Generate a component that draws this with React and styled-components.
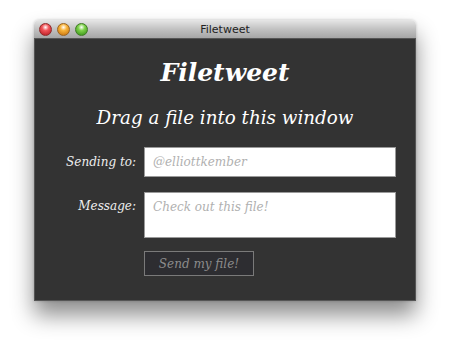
import React from 'react';
import styled, { createGlobalStyle } from 'styled-components';

const GlobalStyle = createGlobalStyle`
  html, body {
    margin: 0;
    padding: 0;
    background: #ffffff;
  }
`;

const Page = styled.div`
  width: 450px;
  height: 348px;
  padding: 20px 0 0 34px;
  box-sizing: border-box;
  overflow: hidden;
`;

const Window = styled.div`
  width: 382px;
  box-shadow: 0 14px 22px rgba(0, 0, 0, 0.45), 0 0 3px rgba(0, 0, 0, 0.2);
  border-radius: 5px 5px 0 0;
`;

const TitleBar = styled.div`
  height: 19px;
  display: flex;
  align-items: center;
  position: relative;
  padding-left: 5px;
  border-radius: 5px 5px 0 0;
  background: linear-gradient(#e6e6e6, #c2c2c2 50%, #a6a6a6);
  border-bottom: 1px solid #555;
  box-sizing: border-box;
`;

const Lights = styled.div`
  display: flex;
  gap: 5px;
`;

const Light = styled.span`
  width: 13px;
  height: 13px;
  border-radius: 50%;
  box-sizing: border-box;
  border: 1px solid ${({ edge }) => edge};
  background: radial-gradient(circle at 50% 30%, #ffffff 0%, ${({ color }) => color} 35%, ${({ deep }) => deep} 100%);
`;

const WindowTitle = styled.div`
  position: absolute;
  left: 0;
  right: 0;
  text-align: center;
  font-family: 'DejaVu Sans', sans-serif;
  font-size: 11px;
  color: #222222;
  pointer-events: none;
`;

const Content = styled.div`
  height: 262px;
  background: #333333;
  padding: 18px 20px 0 0;
  box-sizing: border-box;
  font-family: 'DejaVu Serif', serif;
  font-style: italic;
  border: 1px solid #555;
  border-top: none;
`;

const Heading = styled.h1`
  margin: 0 0 15px 20px;
  text-align: center;
  font-size: 25px;
  line-height: 32px;
  font-weight: bold;
  color: #ffffff;
`;

const Tagline = styled.p`
  margin: 0 0 15px 20px;
  text-align: center;
  font-size: 18.3px;
  line-height: 28px;
  color: #ffffff;
`;

const Form = styled.div`
  display: grid;
  grid-template-columns: 101px 252px;
  column-gap: 8px;
  row-gap: 15px;
`;

const Label = styled.label`
  text-align: right;
  color: #eeeeee;
  font-size: 12px;
  line-height: 18px;
  padding-top: ${({ top }) => top}px;
`;

const TextField = styled.input`
  height: 30px;
  margin: 0;
  box-sizing: border-box;
  border: 1px solid #9a9a9a;
  background: #ffffff;
  padding: 0 8px;
  font-family: 'DejaVu Serif', serif;
  font-style: italic;
  font-size: 12px;
  outline: none;

  &::placeholder {
    color: #b0b0b0;
  }
`;

const TextArea = styled.textarea`
  height: 46px;
  margin: 0;
  box-sizing: border-box;
  border: 1px solid #9a9a9a;
  background: #ffffff;
  padding: 5px 8px;
  font-family: 'DejaVu Serif', serif;
  font-style: italic;
  font-size: 12px;
  line-height: 18px;
  resize: none;
  outline: none;

  &::placeholder {
    color: #b0b0b0;
  }
`;

const SendButton = styled.button`
  grid-column: 2;
  justify-self: start;
  margin-top: -2px;
  width: 110px;
  height: 25px;
  box-sizing: border-box;
  background: #2d2d31;
  border: 1px solid #7a7a7a;
  color: #8c8c8c;
  font-family: 'DejaVu Serif', serif;
  font-style: italic;
  font-size: 12px;
  padding: 0;
`;

export default function App() {
  return (
    <Page>
      <GlobalStyle />
      <Window>
        <TitleBar>
          <Lights>
            <Light color="#f2555a" deep="#b0131b" edge="#8e2a2a" />
            <Light color="#f8b43a" deep="#c26a08" edge="#9a6420" />
            <Light color="#7ed24a" deep="#2f8a12" edge="#3f7a25" />
          </Lights>
          <WindowTitle>Filetweet</WindowTitle>
        </TitleBar>
        <Content>
          <Heading>Filetweet</Heading>
          <Tagline>Drag a file into this window</Tagline>
          <Form>
            <Label top={6}>Sending to:</Label>
            <TextField placeholder="@elliottkember" />
            <Label top={5}>Message:</Label>
            <TextArea placeholder="Check out this file!" />
            <SendButton>Send my file!</SendButton>
          </Form>
        </Content>
      </Window>
    </Page>
  );
}
